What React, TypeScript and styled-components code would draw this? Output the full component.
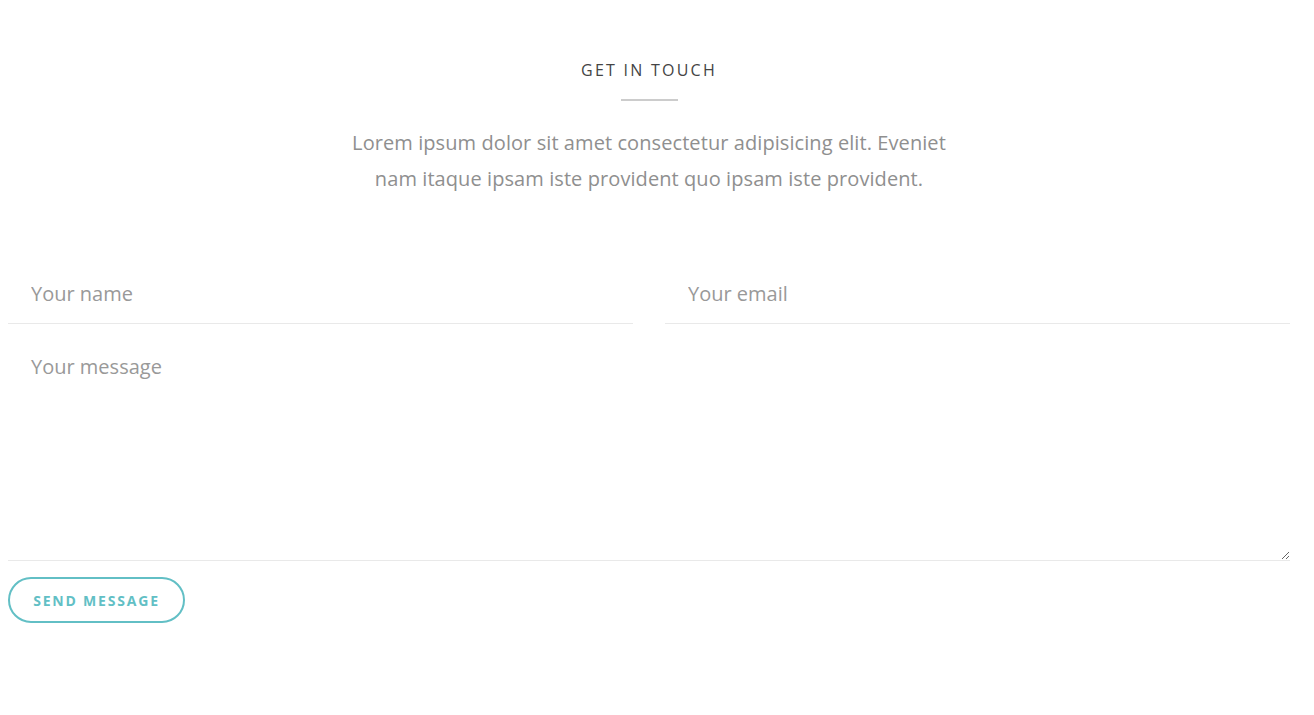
import React from 'react';
import styled, { createGlobalStyle } from 'styled-components';

const GlobalStyle = createGlobalStyle`
  body {
    margin: 0;
    background: #fff;
    font-family: "Open Sans", "Liberation Sans", sans-serif;
  }
`;

const Section = styled.section`
  padding: 60px 24px 60px 8px;
`;

const Header = styled.div`
  display: flex;
  flex-direction: column;
  align-items: center;
  text-align: center;
`;

const Title = styled.h2`
  margin: 0;
  font-size: 16px;
  font-weight: 500;
  letter-spacing: 2.25px;
  color: #444;
  line-height: 20px;
`;

const Divider = styled.span`
  display: block;
  width: 57px;
  height: 2px;
  background: #ccc;
  margin: 19px 0 24px;
`;

const Lead = styled.p`
  margin: 0;
  max-width: 620px;
  font-size: 20px;
  letter-spacing: 0.08px;
  line-height: 36px;
  color: #8f8f8f;
`;

const Form = styled.form`
  margin-top: 66px;
  display: flex;
  flex-direction: column;
`;

const Row = styled.div`
  display: grid;
  grid-template-columns: 1fr 1fr;
  gap: 32px;
`;

const Input = styled.input`
  height: 61px;
  box-sizing: border-box;
  border: none;
  border-bottom: 1px solid #e9e9e9;
  padding: 0 23px;
  font-family: inherit;
  font-size: 20px;
  color: #555;
  outline: none;
  &::placeholder {
    color: #999;
  }
`;

const TextArea = styled.textarea`
  margin-top: 8px;
  height: 229px;
  box-sizing: border-box;
  border: none;
  border-bottom: 1px solid #e9e9e9;
  padding: 20px 23px;
  font-family: inherit;
  font-size: 20px;
  line-height: 30px;
  color: #555;
  outline: none;
  &::placeholder {
    color: #999;
  }
`;

const SendButton = styled.button`
  align-self: flex-start;
  margin-top: 16px;
  width: 177px;
  height: 46px;
  border: 2px solid #62bfc5;
  border-radius: 23px;
  background: transparent;
  color: #62bfc5;
  font-family: inherit;
  font-size: 14px;
  font-weight: 700;
  letter-spacing: 1.8px;
  text-transform: uppercase;
  cursor: pointer;
`;

export default function App() {
  return (
    <>
      <GlobalStyle />
      <Section>
        <Header>
          <Title>GET IN TOUCH</Title>
          <Divider />
          <Lead>
            Lorem ipsum dolor sit amet consectetur adipisicing elit. Eveniet nam itaque ipsam iste
            provident quo ipsam iste provident.
          </Lead>
        </Header>
        <Form onSubmit={(e) => e.preventDefault()}>
          <Row>
            <Input type="text" placeholder="Your name" />
            <Input type="email" placeholder="Your email" />
          </Row>
          <TextArea placeholder="Your message" />
          <SendButton type="submit">Send Message</SendButton>
        </Form>
      </Section>
    </>
  );
}
